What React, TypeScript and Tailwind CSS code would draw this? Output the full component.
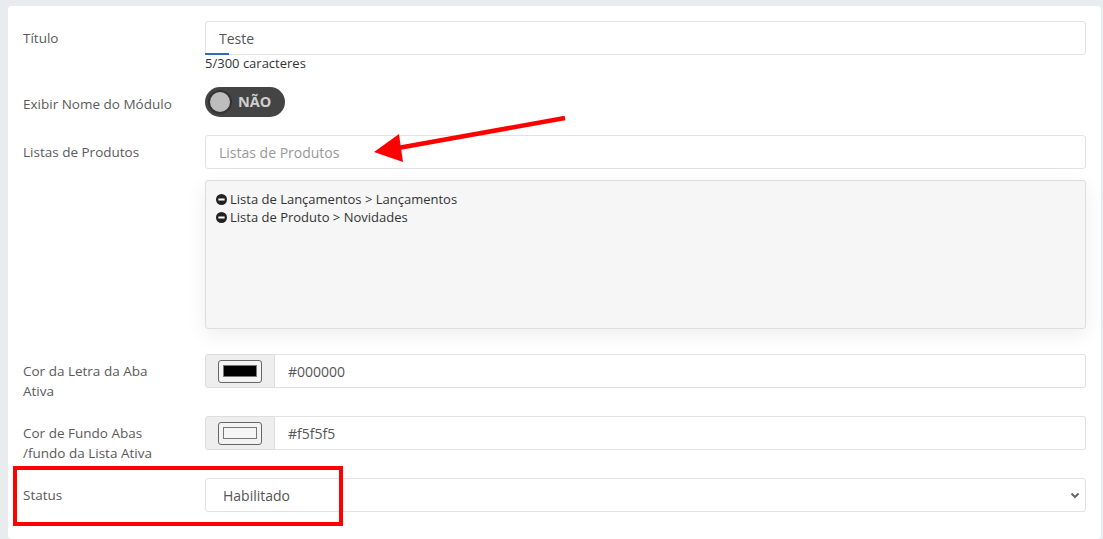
import React from "react";

function MinusCircle() {
  return (
    <svg width="11" height="11" viewBox="0 0 12 12" className="shrink-0">
      <circle cx="6" cy="6" r="6" fill="#222" />
      <rect x="2.6" y="4.9" width="6.8" height="2.2" fill="#fff" />
    </svg>
  );
}

function Swatch({ fill, inner }: { fill: string; inner: string }) {
  return (
    <div className="w-[70px] h-[34px] bg-[#eeeeee] border border-[#dddddd] rounded-l-[3px] flex items-center justify-center shrink-0">
      <div className="w-[44px] h-[23px] border border-[#666] rounded-[3px] bg-[#f3f3f3] flex items-center justify-center">
        <div className={`w-[34px] h-[12px] border ${inner}`} style={{ backgroundColor: fill }} />
      </div>
    </div>
  );
}

export default function App() {
  const font = { fontFamily: '"Open Sans", "Noto Sans", sans-serif' };
  return (
    <div
      className="relative w-[1103px] h-[539px] overflow-hidden bg-[#e9ecef] pl-[8px] pr-[2px] pt-[6px] flex flex-col"
      style={font}
    >
      <div className="flex-1 bg-white rounded-[4px] px-[15px] pt-[15px] text-[13.5px] text-[#5a5a5a]">
        {/* Título */}
        <div className="flex items-start mb-[15px]">
          <label className="w-[182px] shrink-0 pt-[7px] leading-5">Título</label>
          <div className="flex-1">
            <div className="relative h-[34px] border border-[#e2e2e2] rounded-[3px] flex items-center pl-[13px] text-[#555] text-[14px]">
              Teste
              <div className="absolute left-[-1px] bottom-[-1px] w-[24px] h-[2px] bg-[#2f6db3]" />
            </div>
            <div className="text-[13px] leading-[17px] text-[#333]">5/300 caracteres</div>
          </div>
        </div>

        {/* Exibir Nome do Módulo */}
        <div className="flex items-start mb-[18px]">
          <label className="w-[182px] shrink-0 pt-[7px] leading-5">Exibir Nome do Módulo</label>
          <div className="flex-1">
            <div className="w-[80px] h-[30px] rounded-full bg-[#444444] flex items-center pl-[3px] gap-[6px]">
              <div className="w-[24px] h-[24px] rounded-full bg-[#bdbdbd] border-2 border-[#333]" />
              <span className="text-[14.5px] font-bold text-[#cfcfcf]">NÃO</span>
            </div>
          </div>
        </div>

        {/* Listas de Produtos */}
        <div className="flex items-start mb-[25px]">
          <label className="w-[182px] shrink-0 pt-[7px] leading-5">Listas de Produtos</label>
          <div className="flex-1">
            <div className="h-[34px] border border-[#e2e2e2] rounded-[3px] flex items-center pl-[13px] text-[#999] text-[14px]">
              Listas de Produtos
            </div>
            <div className="mt-[11px] h-[149px] bg-[#f6f6f6] border border-[#dedede] rounded-[3px] shadow-[0_6px_20px_rgba(0,0,0,0.07)] pt-[9px] pl-[10px] text-[#333] text-[13px] leading-[18px]">
              <div className="flex items-center gap-[3px]">
                <MinusCircle />
                <span>Lista de Lançamentos &gt; Lançamentos</span>
              </div>
              <div className="flex items-center gap-[3px]">
                <MinusCircle />
                <span>Lista de Produto &gt; Novidades</span>
              </div>
            </div>
          </div>
        </div>

        {/* Cor da Letra */}
        <div className="flex items-start mb-[15px]">
          <label className="w-[182px] shrink-0 pt-[7px] leading-5">
            Cor da Letra da Aba
            <br />
            Ativa
          </label>
          <div className="flex-1 flex">
            <Swatch fill="#000000" inner="border-[#777]" />
            <div className="flex-1 h-[34px] border border-l-0 border-[#e2e2e2] rounded-r-[3px] flex items-center pl-[13px] text-[14px] text-[#555]">
              #000000
            </div>
          </div>
        </div>

        {/* Cor de Fundo */}
        <div className="flex items-start mb-[15px]">
          <label className="w-[182px] shrink-0 pt-[7px] leading-5">
            Cor de Fundo Abas
            <br />
            /fundo da Lista Ativa
          </label>
          <div className="flex-1 flex">
            <Swatch fill="#f5f5f5" inner="border-[#777]" />
            <div className="flex-1 h-[34px] border border-l-0 border-[#e2e2e2] rounded-r-[3px] flex items-center pl-[13px] text-[14px] text-[#555]">
              #f5f5f5
            </div>
          </div>
        </div>

        {/* Status */}
        <div className="flex items-start">
          <label className="w-[182px] shrink-0 pt-[7px] leading-5">Status</label>
          <div className="flex-1 h-[34px] border border-[#e2e2e2] rounded-[3px] flex items-center justify-between pl-[17px] pr-[5px] text-[14px] text-[#555]">
            <span>Habilitado</span>
            <svg width="10" height="8" viewBox="0 0 10 8">
              <path d="M1.5 2.5 L5 6 L8.5 2.5" stroke="#666" strokeWidth="2" fill="none" />
            </svg>
          </div>
        </div>
      </div>

      {/* Annotations */}
      <div className="absolute left-[13px] top-[466px] w-[330px] h-[60px] border-[4px] border-[#ff0000]" />
      <svg className="absolute left-0 top-0 pointer-events-none" width="1103" height="539">
        <line x1="565" y1="118" x2="398" y2="148" stroke="#ff0000" strokeWidth="4.5" />
        <polygon points="374,152 399,134 403,162" fill="#ff0000" />
      </svg>
    </div>
  );
}
